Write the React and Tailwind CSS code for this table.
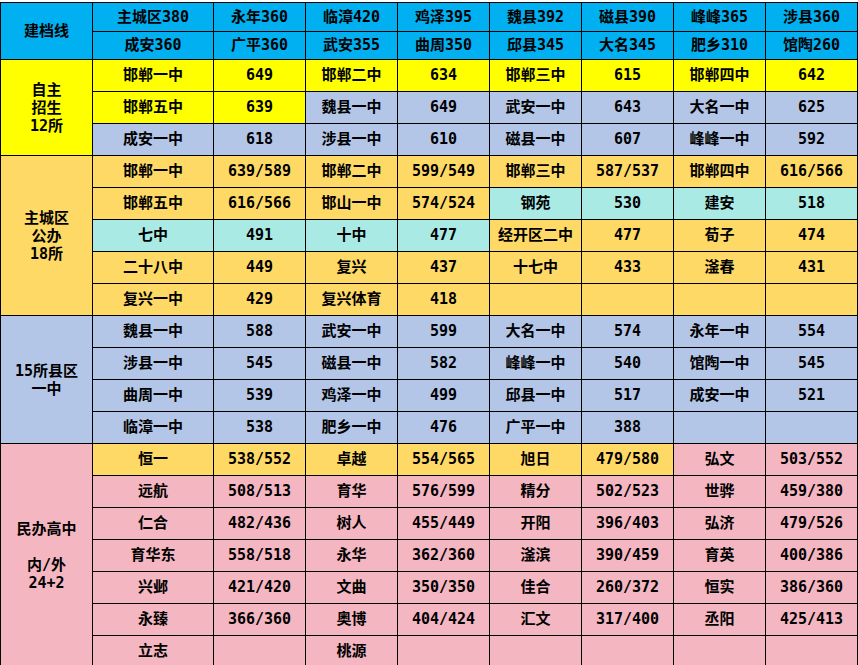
const bg = {
  B: "bg-[#00B0F0]",
  Y: "bg-[#FFFF00]",
  L: "bg-[#B4C6E7]",
  G: "bg-[#FFD966]",
  T: "bg-[#A9EAE5]",
  P: "bg-[#F4B6C0]",
};

const header = [
  ["主城区380", "永年360", "临漳420", "鸡泽395", "魏县392", "磁县390", "峰峰365", "涉县360"],
  ["成安360", "广平360", "武安355", "曲周350", "邱县345", "大名345", "肥乡310", "馆陶260"],
];

// each group: label, label colour, rows of [colours, cells]
const groups = [
  {
    label: ["自主", "招生", "12所"],
    color: "Y",
    rows: [
      ["YYYYYYYY", ["邯郸一中", "649", "邯郸二中", "634", "邯郸三中", "615", "邯郸四中", "642"]],
      ["YYLLLLLL", ["邯郸五中", "639", "魏县一中", "649", "武安一中", "643", "大名一中", "625"]],
      ["LLLLLLLL", ["成安一中", "618", "涉县一中", "610", "磁县一中", "607", "峰峰一中", "592"]],
    ],
  },
  {
    label: ["主城区", "公办", "18所"],
    color: "G",
    rows: [
      ["GGGGGGGG", ["邯郸一中", "639/589", "邯郸二中", "599/549", "邯郸三中", "587/537", "邯郸四中", "616/566"]],
      ["GGGGTTTT", ["邯郸五中", "616/566", "邯山一中", "574/524", "钢苑", "530", "建安", "518"]],
      ["TTTTGGGG", ["七中", "491", "十中", "477", "经开区二中", "477", "荀子", "474"]],
      ["GGGGGGGG", ["二十八中", "449", "复兴", "437", "十七中", "433", "滏春", "431"]],
      ["GGGGGGGG", ["复兴一中", "429", "复兴体育", "418", "", "", "", ""]],
    ],
  },
  {
    label: ["15所县区", "一中"],
    color: "L",
    rows: [
      ["LLLLLLLL", ["魏县一中", "588", "武安一中", "599", "大名一中", "574", "永年一中", "554"]],
      ["LLLLLLLL", ["涉县一中", "545", "磁县一中", "582", "峰峰一中", "540", "馆陶一中", "545"]],
      ["LLLLLLLL", ["曲周一中", "539", "鸡泽一中", "499", "邱县一中", "517", "成安一中", "521"]],
      ["LLLLLLLL", ["临漳一中", "538", "肥乡一中", "476", "广平一中", "388", "", ""]],
    ],
  },
  {
    label: ["民办高中", "\u00a0", "内/外", "24+2"],
    color: "P",
    rows: [
      ["GGGGGGPP", ["恒一", "538/552", "卓越", "554/565", "旭日", "479/580", "弘文", "503/552"]],
      ["PPPPPPPP", ["远航", "508/513", "育华", "576/599", "精分", "502/523", "世骅", "459/380"]],
      ["PPPPPPPP", ["仁合", "482/436", "树人", "455/449", "开阳", "396/403", "弘济", "479/526"]],
      ["PPPPPPPP", ["育华东", "558/518", "永华", "362/360", "滏滨", "390/459", "育英", "400/386"]],
      ["PPPPPPPP", ["兴邺", "421/420", "文曲", "350/350", "佳合", "260/372", "恒实", "386/360"]],
      ["PPPPPPPP", ["永臻", "366/360", "奥博", "404/424", "汇文", "317/400", "丞阳", "425/413"]],
      ["PPPPPPPP", ["立志", "", "桃源", "", "", "", "", ""]],
    ],
  },
];

const spans = { 2: "row-span-2", 3: "row-span-3", 4: "row-span-4", 5: "row-span-5", 7: "row-span-7" };

function Cell({ color, children, className = "" }) {
  return (
    <div className={`${bg[color]} flex items-center justify-center whitespace-nowrap ${className}`}>
      {children}
    </div>
  );
}

export default function App() {
  return (
    <div className="bg-white pt-[2px] min-h-screen">
      <div
        className="grid w-[858px] grid-cols-[91px_120px_repeat(7,91px)] grid-rows-[28px_27px_repeat(19,31px)] gap-px bg-black p-px text-[15px] font-bold text-black"
        style={{ fontFamily: '"DejaVu Sans Mono", "Noto Sans CJK SC", monospace' }}
      >
        <Cell color="B" className="row-span-2">建档线</Cell>
        {header.map((row) =>
          row.map((t, i) => (
            <Cell key={t + i} color="B">{t}</Cell>
          ))
        )}

        {groups.map((g, gi) => (
          <>
            <Cell key={"g" + gi} color={g.color} className={`${spans[g.rows.length]} flex-col leading-[18px]`}>
              {g.label.map((l, li) => (
                <span key={li}>{l}</span>
              ))}
            </Cell>
            {g.rows.map(([colors, cells], ri) =>
              cells.map((t, ci) => (
                <Cell key={`${gi}-${ri}-${ci}`} color={colors[ci]}>{t}</Cell>
              ))
            )}
          </>
        ))}
      </div>
    </div>
  );
}
